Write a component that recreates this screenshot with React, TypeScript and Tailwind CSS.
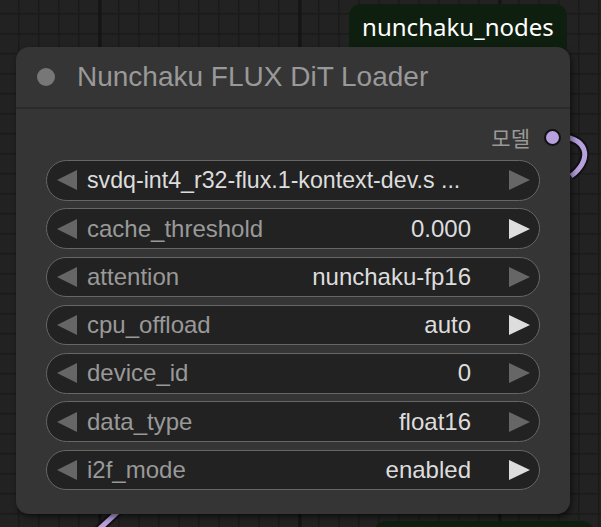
import React from 'react'

type Row = { label?: string; value: string; bright: boolean; full?: boolean }

const rows: Row[] = [
	{ value: 'svdq-int4_r32-flux.1-kontext-dev.s ...', bright: false, full: true },
	{ label: 'cache_threshold', value: '0.000', bright: true },
	{ label: 'attention', value: 'nunchaku-fp16', bright: false },
	{ label: 'cpu_offload', value: 'auto', bright: true },
	{ label: 'device_id', value: '0', bright: false },
	{ label: 'data_type', value: 'float16', bright: false },
	{ label: 'i2f_mode', value: 'enabled', bright: true },
]

function Arrow({ dir, bright }: { dir: 'left' | 'right'; bright?: boolean }) {
	return (
		<svg width="21" height="20" viewBox="0 0 21 20" className="shrink-0">
			{dir === 'left' ? (
				<polygon points="20,0 20,20 0,10" fill="#666666" />
			) : (
				<polygon points="0,0 0,20 21,10" fill={bright ? '#dddddd' : '#666666'} />
			)}
		</svg>
	)
}

function Widget({ row }: { row: Row }) {
	return (
		<div className="flex h-[40.5px] items-center rounded-full border-[1.5px] border-[#666] bg-[#222] pl-[10px] pr-[9px] text-[24px] leading-none">
			<Arrow dir="left" />
			{row.full ? (
				<span className="ml-[9px] flex-1 whitespace-nowrap text-[23.2px] text-[#ddd]">{row.value}</span>
			) : (
				<>
					<span className="ml-[9px] text-[#999]">{row.label}</span>
					<span className="ml-auto mr-[38px] text-[#ddd]">{row.value}</span>
				</>
			)}
			<Arrow dir="right" bright={row.bright} />
		</div>
	)
}

export default function App() {
	return (
		<div className="relative h-[527px] w-[601px] overflow-hidden bg-[#222] font-['Liberation_Sans',Arial,sans-serif]">
			{/* canvas grid */}
			<svg className="absolute inset-0" width="601" height="527">
				<defs>
					<pattern id="minor" x="-2" y="-7" width="20" height="20" patternUnits="userSpaceOnUse">
						<path d="M0 0H20M0 0V20" stroke="#1a1a1a" strokeWidth="3" fill="none" />
					</pattern>
				</defs>
				<rect width="601" height="527" fill="url(#minor)" />
				<path d="M100 0V527M300 0V527M500 0V527" stroke="#151515" strokeWidth="3" />
			</svg>

			{/* links */}
			<svg className="absolute inset-0" width="601" height="527">
				<path d="M560 136 C592 140 590 162 571 176" stroke="#111" strokeWidth="9" fill="none" />
				<path d="M560 136 C592 140 590 162 571 176" stroke="#b6a0de" strokeWidth="5" fill="none" />
				<path d="M96 532 L122 508" stroke="#111" strokeWidth="9" fill="none" />
				<path d="M96 532 L122 508" stroke="#b6a0de" strokeWidth="5" fill="none" />
			</svg>

			{/* source badge */}
			<div className="absolute left-[349px] top-[4px] h-[60px] w-[218px] rounded-[12px] bg-[#0f1f0f] pt-[7px] text-center font-['Noto_Sans',sans-serif] text-[24px] leading-[32px] text-white">
				nunchaku_nodes
			</div>
			<div className="absolute left-[374px] top-[521px] h-[40px] w-[220px] rounded-[12px] bg-[#0f1f0f]" />

			{/* node */}
			<div className="absolute left-[16px] top-[47px] flex h-[467px] w-[554px] flex-col rounded-[13px] bg-[#353535] shadow-[2px_3px_6px_rgba(0,0,0,0.55)]">
				<div className="flex h-[62px] shrink-0 items-center border-b-2 border-[#2b2b2b] pl-[21px]">
					<span className="h-[18px] w-[18px] rounded-full bg-[#777]" />
					<span className="ml-[22px] text-[28px] leading-none text-[#999]">Nunchaku FLUX DiT Loader</span>
				</div>
				<div className="flex h-[51px] shrink-0 items-center justify-end pr-[9px] pt-[5px]">
					<span className="font-['Noto_Sans_CJK_KR',sans-serif] text-[21px] leading-none text-[#999]">모델</span>
					<span className="ml-[14px] h-[17px] w-[17px] rounded-full border-2 border-[#111] bg-[#b6a0de]" />
				</div>
				<div className="flex flex-col gap-[7.8px] px-[30px]">
					{rows.map((r, i) => (
						<Widget key={i} row={r} />
					))}
				</div>
			</div>
		</div>
	)
}
